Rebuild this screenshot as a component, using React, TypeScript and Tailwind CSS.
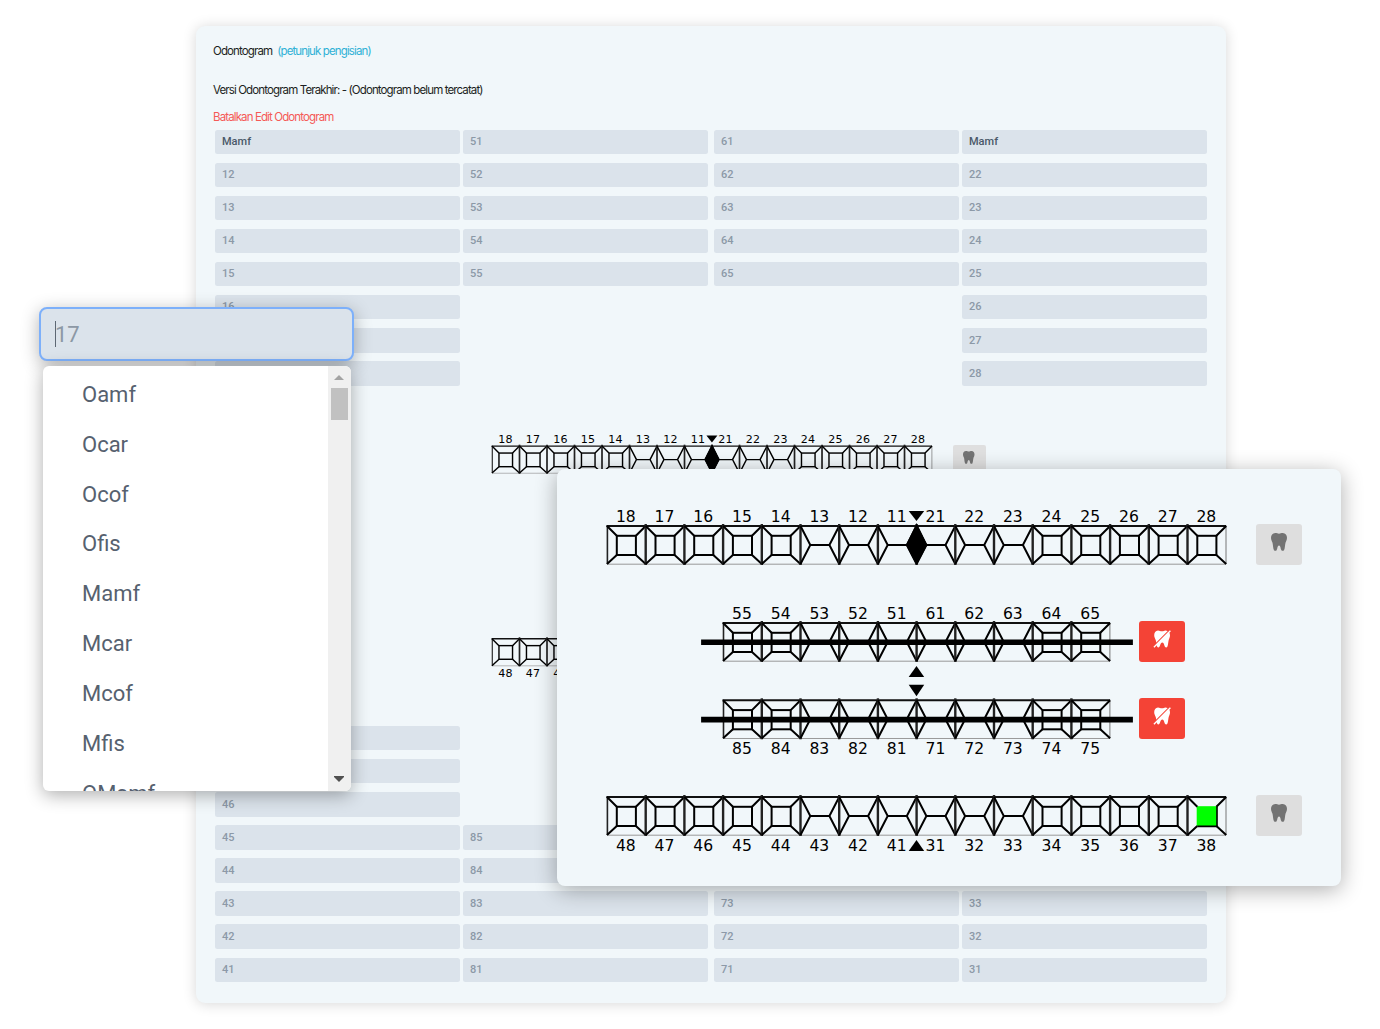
import React from "react";

const PITCH = 38.7;

type RowSpec = {
  y: number;
  start: number;
  labels: number[];
  labelY: number;
  baby?: boolean;
};

const range = (from: number, to: number) => {
  const out: number[] = [];
  const step = from < to ? 1 : -1;
  for (let i = from; i !== to + step; i += step) out.push(i);
  return out;
};

const ROWS: RowSpec[] = [
  { y: 17, start: 0, labels: [...range(18, 11), ...range(21, 28)], labelY: -4 },
  { y: 114, start: 3, labels: [...range(55, 51), ...range(61, 65)], labelY: -4, baby: true },
  { y: 191.3, start: 3, labels: [...range(85, 81), ...range(71, 75)], labelY: 54, baby: true },
  { y: 288, start: 0, labels: [...range(48, 41), ...range(31, 38)], labelY: 54 },
];

function Tooth({ label }: { label: number }) {
  const front = label % 10 <= 3;
  const H = 38;
  const a = 9.8;
  const b = PITCH - a;
  return (
    <g fill="none" stroke="#000" strokeWidth="2">
      {label === 38 && <rect x={a - 0.6} y={a - 0.6} width={20.5} height={20} fill="#00ff00" stroke="none" />}
      {front ? (
        <path d={`M0 0L${a} ${H / 2}L0 ${H}M${PITCH} 0L${b} ${H / 2}L${PITCH} ${H}M${a} ${H / 2}H${b}`} />
      ) : (
        <>
          <path d={`M0 0L${a} ${a}M${PITCH} 0L${b} ${a}M0 ${H}L${a} ${H - 9}M${PITCH} ${H}L${b} ${H - 9}`} />
          {label !== 38 && <rect x={a} y={a} width={b - a} height={H - 9 - a} />}
          {label === 38 && <path d={`M${b + 0.6} ${a}V${H - 8.6}H${a}`} strokeWidth="1.6" />}
        </>
      )}
    </g>
  );
}

function Chart({ className }: { className: string }) {
  return (
    <svg viewBox="0 0 620 345" className={className}>
      {ROWS.map((row) => {
        const w = row.labels.length * PITCH;
        return (
          <g key={row.y} transform={`translate(${row.start * PITCH} ${row.y})`}>
            <path d={`M-0.6 0H${w}`} stroke="#111" strokeWidth="2" />
            <path d={`M0 38.2H${w}`} stroke="#999" strokeWidth="1" />
            <path d={`M${w - 0.2} 0V38`} stroke="#777" strokeWidth="1" />
            {row.labels.map((n, i) => (
              <g key={n} transform={`translate(${i * PITCH} 0)`}>
                <path d={i === 0 ? "M0.4 0V38" : "M0 -2V39"} stroke="#222" strokeWidth={i === 0 ? 1.6 : 2.4} />
                <Tooth label={n} />
                <text
                  x={PITCH / 2 - 0.5}
                  y={row.labelY}
                  textAnchor="middle"
                  fontSize="15.6"
                  fill="#000"
                  fontFamily="'DejaVu Sans', sans-serif"
                >
                  {n}
                </text>
              </g>
            ))}
            {row.baby && <path d={`M-22 19.3H${w + 22.8}`} stroke="#000" strokeWidth="5.6" />}
          </g>
        );
      })}
      <path d="M301.700 2H317.200L309.500 12Z" />
      <path d="M309.600 14L320.300 36L309.600 56L299 36Z" />
      <path d="M301.700 168H317.200L309.500 157Z" />
      <path d="M301.700 175.800H317.200L309.500 187.200Z" />
      <path d="M301.700 342H317.200L309.500 331Z" />
    </svg>
  );
}

function ToothIcon({ className }: { className: string }) {
  return (
    <svg viewBox="0 0 16 18" className={className} fill="currentColor">
      <path d="M4.200 0C6 0 6.500 .7 8 .7S10 0 11.800 0C14.500 0 16 2.200 16 4.800C16 7 15 8.400 14.500 9.800C13.900 12 14 16 13 17.200C12.300 17.900 11 17.900 10.400 17.200C9.400 16 9.700 12.600 8 12.600S6.600 16 5.600 17.200C5 17.900 3.700 17.900 3 17.200C2 16 2.100 12 1.500 9.800C1 8.400 0 7 0 4.800C0 2.200 1.500 0 4.200 0Z" />
    </svg>
  );
}

function ToothSlash() {
  return (
    <svg viewBox="0 0 18 18" className="mb-1.5 h-[18px] w-[18px]" fill="#fff">
      <path d="M5 .4C6.700 .4 7.300 1.200 9 1.200S11 .4 12.500 .4C15.500 .4 17 2.600 17 5.200C17 7.200 16.200 8.600 15.700 10C15.100 12.200 15.200 17.600 13.200 17.600C11 17.600 11.500 12.600 9.300 12.600S7.300 17.600 5.300 17.600C3.500 17.600 3.500 12 2.700 10C2.200 8.600 1.200 7.200 1.200 5.200C1.200 2.600 2.500 .4 5 .4Z" />
      <path d="M.2 16.500L16.300 .4" stroke="#f44336" strokeWidth="1.300" />
      <path d="M.9 17.300L17.400 .8" stroke="#fff" strokeWidth="1.300" />
    </svg>
  );
}

function Field({ text, filled }: { text: string; filled?: boolean }) {
  return (
    <div
      className={
        "flex h-[24.500px] w-[245px] items-center rounded-[2.500px] bg-[#dbe3eb] px-[7px] pt-px text-[11px] font-medium " +
        (filled ? "text-[#4a5868]" : "tracking-[0.1px] text-[#8c99a7]")
      }
    >
      {text}
    </div>
  );
}

function Column({ items }: { items: (number | string)[] }) {
  return (
    <div className="flex flex-col gap-[8.600px]">
      {items.map((t, i) => (
        <Field key={i} text={String(t)} filled={typeof t === "string"} />
      ))}
    </div>
  );
}

const OPTIONS = ["Oamf", "Ocar", "Ocof", "Ofis", "Mamf", "Mcar", "Mcof", "Mfis", "OMamf"];

export default function App() {
  return (
    <div className="relative h-[1029px] w-[1380px] overflow-hidden bg-white pt-[26px] font-['Roboto',sans-serif]">
      <main className="ml-[196px] flex h-[977px] w-[1030px] flex-col rounded-[9px] bg-[#f1f7fa] px-[17px] shadow-[0_1px_14px_rgba(0,0,0,0.16)]">
        <header className="flex flex-col font-['Inter',sans-serif] text-[11.500px] leading-4 tracking-[-0.880px] text-[#1c1f22]">
          <p className="mt-[17px] flex gap-[5px]">
            <span>Odontogram</span>
            <span className="text-[#2fb1d6]">(petunjuk pengisian)</span>
          </p>
          <p className="mt-[23px]">Versi Odontogram Terakhir: - (Odontogram belum tercatat)</p>
          <p className="mt-[11px] text-[#f55a57]">Batalkan Edit Odontogram</p>
        </header>
        <section className="ml-[2px] mt-[4.500px] flex items-start gap-[3px]">
          <Column items={["Mamf", ...range(12, 18)]} />
          <Column items={range(51, 55)} />
          <div className="ml-[3px]">
            <Column items={range(61, 65)} />
          </div>
          <Column items={["Mamf", ...range(22, 28)]} />
        </section>
        <section className="ml-[278.500px] mt-[48px] flex h-[246px] items-start">
          <Chart className="h-[245.200px] w-[440.600px] shrink-0 overflow-visible" />
          <div className="ml-[20.500px] mt-[11px] flex h-[29px] w-[33px] items-center justify-center rounded-[2px] bg-[#dfdfdf] text-[#747474]">
            <ToothIcon className="mb-1 h-[13px] w-[11.500px]" />
          </div>
        </section>
        <section className="mb-[21px] ml-[2px] mt-auto flex items-end gap-[3px]">
          <Column items={range(48, 41)} />
          <Column items={range(85, 81)} />
          <div className="ml-[3px]">
            <Column items={range(75, 71)} />
          </div>
          <Column items={range(38, 31)} />
        </section>
      </main>

      <div className="absolute left-[557px] top-[469px] flex h-[417px] w-[784px] items-start rounded-[8px] bg-[#f1f7fa] pl-[50px] pt-[40px] shadow-[0_4px_22px_rgba(0,0,0,0.32)]">
        <Chart className="h-[345px] w-[620px] shrink-0 overflow-visible" />
        <div className="ml-[-88px] mt-[15px] flex w-[162.500px] flex-col">
          <button className="flex h-[41px] w-[46px] items-center justify-center self-end rounded-[3px] bg-[#dedede] text-[#737373]">
            <ToothIcon className="mb-1.5 h-[18px] w-4" />
          </button>
          <button className="mt-14 flex h-[41px] w-[46px] items-center justify-center rounded-[3px] bg-[#f44336]">
            <ToothSlash />
          </button>
          <button className="mt-9 flex h-[41px] w-[46px] items-center justify-center rounded-[3px] bg-[#f44336]">
            <ToothSlash />
          </button>
          <button className="mt-14 flex h-[41px] w-[46px] items-center justify-center self-end rounded-[3px] bg-[#dedede] text-[#737373]">
            <ToothIcon className="mb-1.5 h-[18px] w-4" />
          </button>
        </div>
      </div>

      <div className="absolute left-[39px] top-[307px] w-[315px]">
        <div className="flex h-[54px] items-center rounded-[8px] border-[2.500px] border-[#7db0fa] bg-[#dbe3eb] pl-[14px] text-[22px] text-[#8c98a5] shadow-[0_4px_18px_rgba(0,0,0,0.3)]">
          <span className="h-[26px] w-px bg-[#5d6874]" />
          <span className="-ml-px">17</span>
        </div>
        <div className="ml-[3.500px] mt-[4.500px] flex h-[425.500px] w-[308px] overflow-hidden rounded-[6px] bg-white shadow-[0_4px_18px_rgba(0,0,0,0.32)]">
          <ul className="flex-1 pl-[39.500px] pt-[4px] text-[22px] text-[#56616f]">
            {OPTIONS.map((o) => (
              <li key={o} className="flex h-[49.850px] items-center">
                {o}
              </li>
            ))}
          </ul>
          <div className="flex w-[23px] flex-col items-center bg-[#f0f0f0] py-[9px]">
            <svg viewBox="0 0 10 5" className="h-[5px] w-[10px]" fill="#a3a3a3">
              <path d="M0 5L5 0L10 5Z" />
            </svg>
            <div className="mt-2 h-8 w-[17px] bg-[#c1c1c1]" />
            <svg viewBox="0 0 10 6" className="mt-auto h-[6px] w-[10px]" fill="#505050">
              <path d="M0 0H10V1L5 6L0 1Z" />
            </svg>
          </div>
        </div>
      </div>
    </div>
  );
}
